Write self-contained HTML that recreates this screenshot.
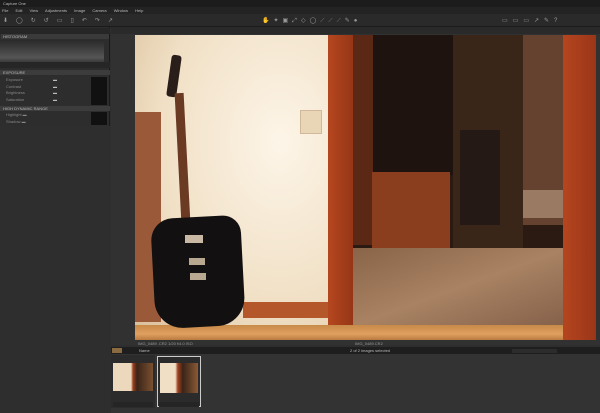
<!DOCTYPE html><html><head><style>
*{margin:0;padding:0;box-sizing:border-box}
body{width:600px;height:413px;background:#2e2e2e;position:relative;overflow:hidden;font-family:"Liberation Sans",sans-serif;font-size:4px;color:#aaa}
div{position:absolute}
.t{font-size:4px;color:#bbb;white-space:nowrap}
</style></head><body>
<div style="left:0;top:0;width:600px;height:7px;background:#1c1c1c"></div>
<div class="t" style="left:3px;top:1px">Capture One</div>
<div style="left:0;top:7px;width:600px;height:7px;background:#232323"></div>
<div class="t" style="left:2px;top:8px;word-spacing:6px">File Edit View Adjustments Image Camera Window Help</div>
<div style="left:0;top:14px;width:600px;height:13px;background:#2a2a2a;border-bottom:1px solid #1a1a1a"></div>
<div class="t" style="left:3px;top:17px;font-size:6px;letter-spacing:8px;color:#999">⬇◯↻↺▭▯↶↷↗</div>
<div class="t" style="left:262px;top:17px;font-size:6px;letter-spacing:4px;color:#999">✋✦▣⤢◇◯⟋⟋⟋✎●</div>
<div class="t" style="left:502px;top:17px;font-size:6px;letter-spacing:5px;color:#999">▭▭▭↗✎?</div>
<!-- left panel -->
<div style="left:0;top:27px;width:110px;height:318px;background:#2d2d2d;border-right:1px solid #1a1a1a"></div>
<div style="left:0;top:28px;width:110px;height:6px;background:#262626"></div>
<div style="left:1px;top:34px;width:108px;height:5px;background:#3a3a3a"></div>
<div class="t" style="left:3px;top:34px">HISTOGRAM</div>
<div style="left:0;top:40px;width:104px;height:22px;background:linear-gradient(#2a2a2a,#555 80%,#3a3a3a)"></div>
<div style="left:0;top:62px;width:110px;height:6px;background:#262626"></div>
<div style="left:0;top:70px;width:110px;height:5px;background:#3c3c3c"></div>
<div class="t" style="left:3px;top:70px">EXPOSURE</div>
<div style="left:91px;top:77px;width:16px;height:28px;background:#111"></div>
<div class="t" style="left:6px;top:77px;line-height:6.5px;color:#888">Exposure<br>Contrast<br>Brightness<br>Saturation</div>
<div class="t" style="left:53px;top:77px;line-height:6.5px">▬<br>▬<br>▬<br>▬</div>
<div style="left:0;top:106px;width:110px;height:5px;background:#3c3c3c"></div>
<div class="t" style="left:3px;top:106px">HIGH DYNAMIC RANGE</div>
<div style="left:91px;top:112px;width:16px;height:13px;background:#111"></div>
<div class="t" style="left:6px;top:112px;line-height:6.5px;color:#888">Highlight ▬<br>Shadow ▬</div>
<div style="left:0;top:126px;width:110px;height:219px;background:#2e2e2e"></div>
<!-- viewer -->
<div style="left:111px;top:27px;width:489px;height:318px;background:#313131"></div>
<div style="left:111px;top:27px;width:489px;height:7px;background:#2a2a2a"></div>
<div style="left:135px;top:35px;width:461px;height:305px;background:#2a1a12;overflow:hidden">
 <div style="left:0;top:0;width:193px;height:305px;background:radial-gradient(ellipse at 75% 35%,#fdf5e8,#f0dfc4 60%,#d8bc98)"></div>
 <div style="left:0;top:77px;width:26px;height:210px;background:#9a5a3a"></div>
 <div style="left:108px;top:267px;width:85px;height:16px;background:#b4582c"></div>
 <div style="left:165px;top:75px;width:22px;height:24px;background:#e8d6b6;border:1px solid #d0b898"></div>
 <div style="left:193px;top:0;width:25px;height:290px;background:linear-gradient(90deg,#b5471f,#963616)"></div>
 <div style="left:218px;top:0;width:20px;height:210px;background:#5a2814"></div>
 <div style="left:238px;top:0;width:80px;height:140px;background:#1e130e"></div>
 <div style="left:237px;top:137px;width:78px;height:76px;background:#8a3e1e"></div>
 <div style="left:318px;top:0;width:70px;height:213px;background:#3a2619"></div>
 <div style="left:325px;top:95px;width:40px;height:95px;background:#241914"></div>
 <div style="left:388px;top:0;width:40px;height:190px;background:#654230"></div>
 <div style="left:388px;top:155px;width:40px;height:28px;background:#9a7a62"></div>
 <div style="left:218px;top:213px;width:210px;height:80px;background:linear-gradient(160deg,#8a6448,#a88262 50%,#85604a)"></div>
 <div style="left:428px;top:0;width:33px;height:305px;background:linear-gradient(90deg,#b5451f,#9a3618)"></div>
 <div style="left:0;top:290px;width:428px;height:15px;background:linear-gradient(#c88a48,#e0a060 60%,#b87a40)"></div>
 <div style="left:34px;top:20px;width:10px;height:42px;background:#2a1e1a;border-radius:3px;transform:rotate(8deg)"></div>
 <div style="left:43px;top:58px;width:9px;height:130px;background:#6a3a22;transform:rotate(-3deg)"></div>
 <div style="left:18px;top:182px;width:90px;height:110px;background:#121010;border-radius:22px 18px 28px 28px;transform:rotate(-3deg)"></div>
 <div style="left:50px;top:200px;width:18px;height:8px;background:#c9b8a4"></div>
 <div style="left:54px;top:223px;width:16px;height:7px;background:#b8a890"></div>
 <div style="left:55px;top:238px;width:16px;height:7px;background:#b8a890"></div>
</div>
<div class="t" style="left:138px;top:341px;color:#999">IMG_0489 .CR2 1/20 f/4.0 ISO</div>
<div class="t" style="left:355px;top:341px;color:#999">IMG_0489.CR2</div>
<!-- filmstrip -->
<div style="left:111px;top:347px;width:489px;height:7px;background:#1e1e1e"></div>
<div style="left:112px;top:348px;width:10px;height:5px;background:#8a6a40"></div>
<div class="t" style="left:139px;top:348px">Name</div>
<div class="t" style="left:350px;top:348px">2 of 2 images selected</div>
<div style="left:512px;top:349px;width:45px;height:4px;background:#2c2c2c"></div>
<div style="left:111px;top:354px;width:489px;height:59px;background:#333"></div>
<div style="left:111px;top:355px;width:44px;height:53px;background:#2b2b2b"></div>
<div style="left:113px;top:363px;width:40px;height:28px;background:linear-gradient(90deg,#ecd9bd 45%,#a0401f 50%,#3a2418 60%,#7a5030);"></div>
<div style="left:157px;top:356px;width:44px;height:51px;background:#2b2b2b;border:1px solid #ccc"></div>
<div style="left:160px;top:363px;width:38px;height:30px;background:linear-gradient(90deg,#f0dfc4 40%,#a0401f 47%,#3a2418 60%,#8a5a36)"></div>
<div style="left:113px;top:402px;width:40px;height:5px;background:#252525"></div>
<div style="left:159px;top:402px;width:40px;height:5px;background:#252525"></div>
</body></html>
